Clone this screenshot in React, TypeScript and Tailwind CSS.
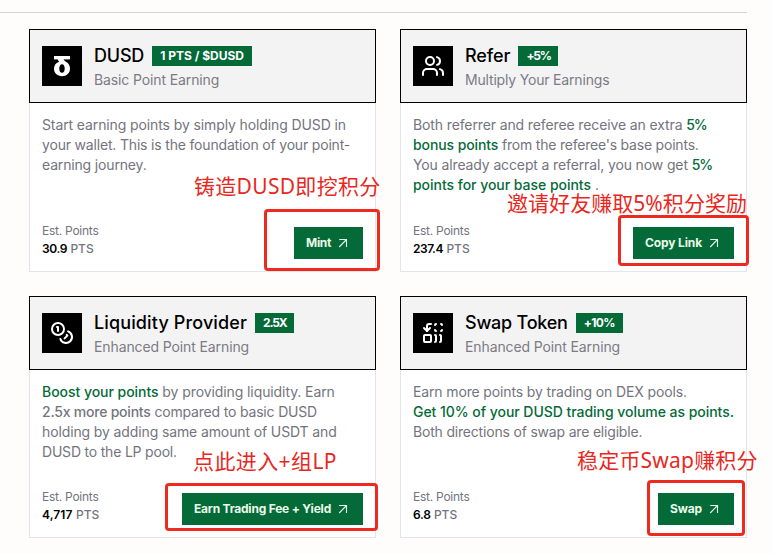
import type { ReactNode } from 'react';
import { Coins, ReplaceAll, Users } from 'lucide-react';

function ArrowIcon() {
    return (
        <svg width="16" height="16" viewBox="0 0 16 16" fill="none" stroke="currentColor" strokeWidth="1.1">
            <path d="M4.2 4.5H11.5V12M11.5 4.5L4.2 12" />
        </svg>
    );
}

function DusdLogo() {
    return (
        <svg width="24" height="24" viewBox="0 0 24 24" fill="none">
            <path d="M4 2H20V5.4H4Z" fill="white" />
            <path
                fillRule="evenodd"
                clipRule="evenodd"
                d="M7.8 5H13.6C13.8 6.2 14.6 7 16 7.8C18.8 9.4 20 11.7 20 14.5C20 19.2 16.6 22.2 12 22.2C7.4 22.2 4 19.2 4 14.8C4 11.2 6 8.6 9.2 7.8C8.4 7.2 7.9 6.2 7.8 5ZM12 10.2C10.3 10.2 9.3 11.9 9.3 14.4C9.3 17.1 10.3 18.8 12 18.8C13.7 18.8 14.7 17.1 14.7 14.4C14.7 11.9 13.7 10.2 12 10.2Z"
                fill="white"
            />
        </svg>
    );
}

interface CardProps {
    icon: ReactNode;
    title: ReactNode;
    badge: ReactNode;
    subtitle: ReactNode;
    points: ReactNode;
    action: ReactNode;
    buttonWidth: string;
    height: string;
    children: ReactNode;
}

function PointCard({ icon, title, badge, subtitle, points, action, buttonWidth, height, children }: CardProps) {
    return (
        <div className={`flex flex-col bg-white ${height}`}>
            <div className="flex h-[74px] shrink-0 items-center gap-3 border border-black bg-[#f3f3f3] px-3">
                <div className="flex size-10 items-center justify-center bg-black text-white">{icon}</div>
                <div className="flex flex-col">
                    <div className="flex h-7 items-center gap-2">
                        <h3 className="text-lg font-medium leading-7 text-black">{title}</h3>
                        {badge}
                    </div>
                    <p className="text-sm text-[#7b7b84]">{subtitle}</p>
                </div>
            </div>

            <div className="flex flex-1 flex-col justify-between border-x border-b border-[#e4e5ea] p-3">
                <div className="whitespace-nowrap text-sm text-[#74747d]">{children}</div>
                <div className="flex items-end justify-between">
                    <div className="text-xs text-[#74747d]">
                        <div className="tracking-[-0.25px]">Est. Points</div>
                        <div className="leading-5">
                            {points} <span className="font-medium">PTS</span>
                        </div>
                    </div>
                    <button className={`flex h-8 items-center justify-between bg-[#046a38] px-3 text-xs font-bold text-[#e9fbe9] ${buttonWidth}`}>
                        {action}
                        <ArrowIcon />
                    </button>
                </div>
            </div>
        </div>
    );
}

const badgeStyle = 'flex h-5 items-center bg-[#046a38] pl-2 text-xs font-bold text-white';
const green = 'font-medium text-[#046a38]';
const note = "absolute whitespace-nowrap font-['Noto_Sans','Noto_Sans_CJK_SC',sans-serif] text-[21px] leading-6 font-normal text-[#e8281e]";
const frame = 'absolute rounded-[4px] border-[3px] border-[#ee2a20]';

export default function App() {
    return (
        <div className="relative h-[554px] w-[773px] overflow-hidden bg-[#fefdfb] pt-3 font-['Inter',sans-serif]">
            <div className="mb-4 h-px w-[747px] bg-[#d3d3d9]" />

            <div className="ml-[29px] grid w-[718px] grid-cols-2 gap-6">
                <PointCard
                    icon={<DusdLogo />}
                    title={<span className="tracking-[-0.2px]">DUSD</span>}
                    badge={<span className={`${badgeStyle} w-[100px]`}>1 PTS / $DUSD</span>}
                    subtitle={<span className="tracking-[-0.12px]">Basic Point Earning</span>}
                    points={<span className="font-semibold tracking-[-0.4px] text-black">30.9</span>}
                    action={<span className="tracking-[-0.3px]">Mint</span>}
                    buttonWidth="w-[69px]"
                    height="h-[243px]"
                >
                    <p className="tracking-[-0.11px]">Start earning points by simply holding DUSD in</p>
                    <p className="tracking-[-0.18px]">your wallet. This is the foundation of your point-</p>
                    <p className="tracking-[-0.16px]">earning journey.</p>
                </PointCard>

                <PointCard
                    icon={<Users size={24} />}
                    title={<span className="tracking-[-0.1px]">Refer</span>}
                    badge={<span className={`${badgeStyle} w-10 tracking-[-1.2px]`}>+5%</span>}
                    subtitle={<span className="tracking-[-0.18px]">Multiply Your Earnings</span>}
                    points={<span className="font-semibold tracking-[-0.47px] text-black">237.4</span>}
                    action={<span className="tracking-[-0.12px]">Copy Link</span>}
                    buttonWidth="w-[101px]"
                    height="h-[243px]"
                >
                    <p className="tracking-[-0.12px]">
                        Both referrer and referee receive an extra <span className={`${green} tracking-[-1.1px]`}>5%</span>
                    </p>
                    <p className="tracking-[-0.21px]">
                        <span className={`${green} tracking-[-0.1px]`}>bonus points</span> from the referee's base points.
                    </p>
                    <p className="tracking-[-0.13px]">
                        You already accept a referral, you now get <span className={`${green} tracking-[-1.1px]`}>5%</span>
                    </p>
                    <p className="tracking-[-0.03px]">
                        <span className={green}>points for your base points</span> .
                    </p>
                </PointCard>

                <PointCard
                    icon={<Coins size={24} />}
                    title={<span className="tracking-[0.13px]">Liquidity Provider</span>}
                    badge={<span className={`${badgeStyle} w-[39px] tracking-[-1.2px]`}>2.5X</span>}
                    subtitle={<span className="tracking-[-0.11px]">Enhanced Point Earning</span>}
                    points={<span className="font-semibold tracking-[0.1px] text-black">4,717</span>}
                    action={<span className="tracking-[-0.2px]">Earn Trading Fee + Yield</span>}
                    buttonWidth="w-[181px]"
                    height="h-[242px]"
                >
                    <p className="tracking-[-0.09px]">
                        <span className={`${green} tracking-[-0.04px]`}>Boost your points</span> by providing liquidity. Earn
                    </p>
                    <p className="tracking-[-0.18px]">
                        <span className="font-medium tracking-[-0.22px]">2.5x more points</span> compared to basic DUSD
                    </p>
                    <p className="tracking-[-0.12px]">holding by adding same amount of USDT and</p>
                    <p className="tracking-[-0.2px]">DUSD to the LP pool.</p>
                </PointCard>

                <PointCard
                    icon={<ReplaceAll size={24} />}
                    title={<span className="tracking-[-0.23px]">Swap Token</span>}
                    badge={<span className={`${badgeStyle} w-[47px] tracking-[-0.6px]`}>+10%</span>}
                    subtitle={<span className="tracking-[-0.11px]">Enhanced Point Earning</span>}
                    points={<span className="font-semibold tracking-[-0.33px] text-black">6.8</span>}
                    action={<span className="tracking-[-0.14px]">Swap</span>}
                    buttonWidth="w-[76px]"
                    height="h-[242px]"
                >
                    <p className="tracking-[-0.14px]">Earn more points by trading on DEX pools.</p>
                    <p className={`${green} tracking-[-0.04px]`}>Get 10% of your DUSD trading volume as points.</p>
                    <p className="tracking-[-0.19px]">Both directions of swap are eligible.</p>
                </PointCard>
            </div>

            {/* Highlight frames around the buttons */}
            <div className={`${frame} left-[264px] top-[209px] h-[62px] w-[116px]`} />
            <div className={`${frame} left-[618px] top-[215px] h-[51px] w-[131px]`} />
            <div className={`${frame} left-[165px] top-[483px] h-[48px] w-[213px]`} />
            <div className={`${frame} left-[647px] top-[480px] h-[56px] w-[98px]`} />

            {/* Notes over the cards */}
            <div className={`${note} left-[194px] top-[174px] tracking-[0.3px]`}>铸造DUSD即挖积分</div>
            <div className={`${note} left-[507px] top-[191px] tracking-[0.05px]`}>邀请好友赚取5%积分奖励</div>
            <div className={`${note} left-[193px] top-[449px] tracking-[0.4px]`}>点此进入+组LP</div>
            <div className={`${note} left-[577px] top-[448px] tracking-[0.2px]`}>稳定币Swap赚积分</div>
        </div>
    );
}
